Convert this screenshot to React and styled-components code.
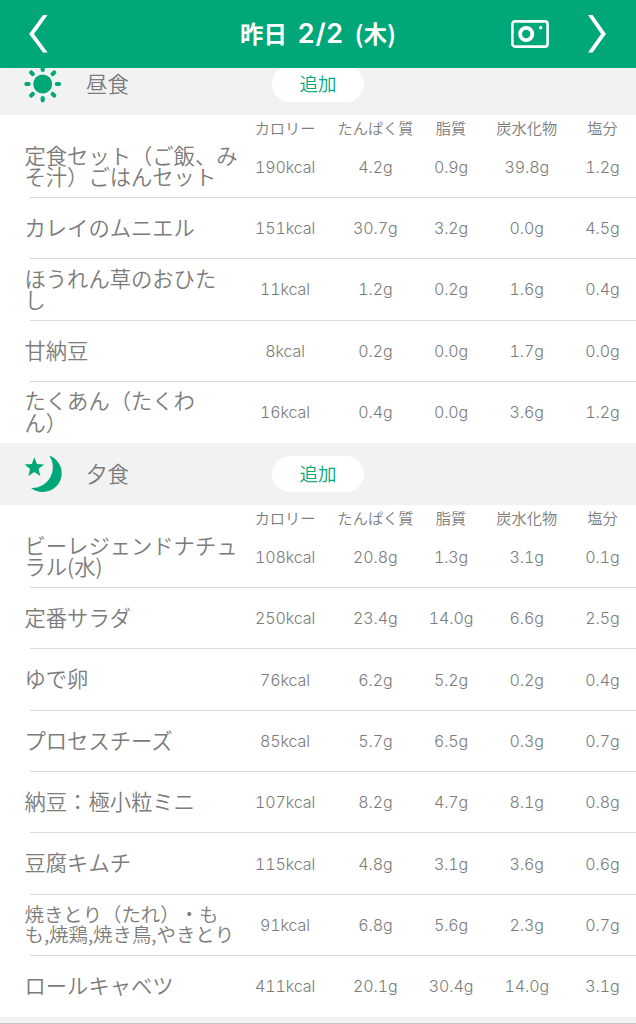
import styled, { createGlobalStyle } from 'styled-components';

const GREEN = '#00a778';

const GlobalStyle = createGlobalStyle`
  * {
    box-sizing: border-box;
  }
  body {
    margin: 0;
    background: #fff;
    color: #7b7b7b;
    font-family: 'Noto Sans CJK JP', sans-serif;
    font-weight: 350;
    text-spacing-trim: space-all;
  }
`;

const Screen = styled.div`
  width: 636px;
  height: 1024px;
  display: flex;
  flex-direction: column;
  overflow: hidden;
`;

const Header = styled.header`
  display: grid;
  grid-template-columns: 240px 1fr 240px;
  align-items: center;
  flex: none;
  height: 68px;
  background: ${GREEN};
  color: #fff;
`;

const Title = styled.h1`
  display: flex;
  justify-content: space-between;
  margin: 0;
  padding-bottom: 2px;
  font-size: 23.5px;
  line-height: 30px;
  font-weight: 700;
  white-space: nowrap;
`;

const TitleDate = styled.span`
  padding-top: 1px;
  font-family: Inter, sans-serif;
  font-size: 27px;
  font-weight: 600;
  letter-spacing: 0.7px;
`;

const HeaderSide = styled.div`
  display: flex;
  align-items: center;
  justify-content: ${({ $end }) => ($end ? 'flex-end' : 'flex-start')};
  gap: 38px;
  padding: 0 27px;
`;

const Content = styled.main`
  display: flex;
  flex-direction: column;
  justify-content: flex-end;
  flex: none;
  height: 956px;
  overflow: hidden;
`;

const Band = styled.div`
  display: flex;
  align-items: center;
  flex: none;
  height: 61.4px;
  padding-left: 24px;
  background: #f2f2f2;
`;

const MealName = styled.h2`
  width: 186px;
  margin: 0 0 0 24px;
  padding-bottom: 2px;
  font-size: 21.4px;
  line-height: 30px;
  font-weight: 350;
`;

const AddButton = styled.button`
  width: 92px;
  height: 36px;
  padding: 0;
  border: 0;
  border-radius: 18px;
  background: #fff;
  color: ${GREEN};
  font-family: inherit;
  font-size: 18.5px;
  line-height: 33px;
  font-weight: 350;
`;

const Columns = styled.div`
  display: grid;
  grid-template-columns: 247px 90.5px repeat(4, 75.7px);
  align-items: center;
  flex: none;
`;

const LabelRow = styled(Columns)`
  height: 22.1px;
  padding-top: 2px;
  font-size: 15.2px;
  line-height: 16px;
`;

const Row = styled(Columns)`
  height: 60.33px;
`;

const Divider = styled.div`
  flex: none;
  height: 1px;
  margin-left: 30px;
  background: ${({ $last }) => ($last ? 'transparent' : '#d9d9d9')};
`;

const FoodName = styled.div`
  padding: 0 0 ${({ $small }) => ($small ? '1px' : '3px')} 24.5px;
  font-size: ${({ $small }) => ($small ? '19.4px' : '21.3px')};
  line-height: ${({ $small }) => ($small ? '20px' : '21.4px')};
  white-space: pre;
`;

const Label = styled.div`
  text-align: center;
  white-space: nowrap;
  &:nth-child(2) {
    padding-right: 14.5px;
  }
`;

const Value = styled(Label)`
  font-family: Inter, 'Liberation Sans', sans-serif;
  font-size: 16px;
  font-weight: 300;
  font-feature-settings: 'tnum';
  letter-spacing: -0.1px;
`;

const BottomBand = styled.div`
  flex: none;
  height: 6.6px;
  background: #f2f2f2;
  border-bottom: 1px solid #c8c8c8;
`;

const LABELS = ['カロリー', 'たんぱく質', '脂質', '炭水化物', '塩分'];

const LUNCH = [
  { name: '定食セット（ご飯、み\nそ汁）ごはんセット', values: ['190kcal', '4.2g', '0.9g', '39.8g', '1.2g'] },
  { name: 'カレイのムニエル', values: ['151kcal', '30.7g', '3.2g', '0.0g', '4.5g'] },
  { name: 'ほうれん草のおひた\nし', values: ['11kcal', '1.2g', '0.2g', '1.6g', '0.4g'] },
  { name: '甘納豆', values: ['8kcal', '0.2g', '0.0g', '1.7g', '0.0g'] },
  { name: 'たくあん（たくわ\nん）', values: ['16kcal', '0.4g', '0.0g', '3.6g', '1.2g'] },
];

const DINNER = [
  { name: 'ビーレジェンドナチュ\nラル(水)', values: ['108kcal', '20.8g', '1.3g', '3.1g', '0.1g'] },
  { name: '定番サラダ', values: ['250kcal', '23.4g', '14.0g', '6.6g', '2.5g'] },
  { name: 'ゆで卵', values: ['76kcal', '6.2g', '5.2g', '0.2g', '0.4g'] },
  { name: 'プロセスチーズ', values: ['85kcal', '5.7g', '6.5g', '0.3g', '0.7g'] },
  { name: '納豆：極小粒ミニ', values: ['107kcal', '8.2g', '4.7g', '8.1g', '0.8g'] },
  { name: '豆腐キムチ', values: ['115kcal', '4.8g', '3.1g', '3.6g', '0.6g'] },
  { name: '焼きとり（たれ）・も\nも,焼鶏,焼き鳥,やきとり', small: true, values: ['91kcal', '6.8g', '5.6g', '2.3g', '0.7g'] },
  { name: 'ロールキャベツ', values: ['411kcal', '20.1g', '30.4g', '14.0g', '3.1g'] },
];

const Chevron = ({ right }) => (
  <svg width="22" height="38" viewBox="0 0 22 38" fill="#fff">
    <path d={right ? 'M1 0h4.6l13.3 18.9L5.6 37.6H1l13.1-18.7z' : 'M20.6 0H16L2.2 18.9 16 37.6h4.6L7 18.9z'} />
  </svg>
);

const CameraIcon = () => (
  <svg width="38" height="28" viewBox="0 0 38 28" fill="none" stroke="#fff">
    <rect x="1.4" y="1.4" width="35.2" height="25.2" rx="2.6" strokeWidth="2.6" />
    <circle cx="15.2" cy="14" r="6.1" strokeWidth="3.8" />
    <circle cx="29.7" cy="7.8" r="1.7" fill="#fff" stroke="none" />
  </svg>
);

const SunIcon = () => (
  <svg width="38" height="38" viewBox="0 0 38 38">
    <circle cx="18.7" cy="19" r="9.5" fill={GREEN} />
    {[0, 45, 90, 135, 180, 225, 270, 315].map((angle) => (
      <path
        key={angle}
        d="M18.7 2.7v2.2"
        stroke={GREEN}
        strokeWidth="4.2"
        strokeLinecap="round"
        transform={`rotate(${angle} 18.7 19)`}
      />
    ))}
  </svg>
);

const MoonIcon = () => (
  <svg width="38" height="38" viewBox="0 0 38 38" fill={GREEN}>
    <path d="M25.3.5A18.8 18.8 0 0 1 37.7 18.2 18.8 18.8 0 0 1 18.9 37 18.8 18.8 0 0 1 7 33 20.8 20.8 0 0 0 25.3.5z" />
    <path d="M10.3 2.3l2.6 6.7 7.1.4-5.5 4.5 1.8 7-6-3.9-6 3.9 1.8-7L.7 9.4 7.8 9z" />
  </svg>
);

const Meal = ({ icon, name, foods }) => (
  <>
    <Band>
      {icon}
      <MealName>{name}</MealName>
      <AddButton>追加</AddButton>
    </Band>
    <LabelRow>
      <span />
      {LABELS.map((label) => <Label key={label}>{label}</Label>)}
    </LabelRow>
    {foods.map((food, index) => (
      <div key={food.name}>
        <Row>
          <FoodName $small={food.small}>{food.name}</FoodName>
          {food.values.map((value, i) => <Value key={LABELS[i]}>{value}</Value>)}
        </Row>
        <Divider $last={index === foods.length - 1} />
      </div>
    ))}
  </>
);

export default function App() {
  return (
    <Screen>
      <GlobalStyle />
      <Header>
        <HeaderSide><Chevron /></HeaderSide>
        <Title>
          <span>昨日</span>
          <TitleDate>2/2</TitleDate>
          <span>(木)</span>
        </Title>
        <HeaderSide $end>
          <CameraIcon />
          <Chevron right />
        </HeaderSide>
      </Header>
      <Content>
        <Meal icon={<SunIcon />} name="昼食" foods={LUNCH} />
        <Meal icon={<MoonIcon />} name="夕食" foods={DINNER} />
        <BottomBand />
      </Content>
    </Screen>
  );
}
